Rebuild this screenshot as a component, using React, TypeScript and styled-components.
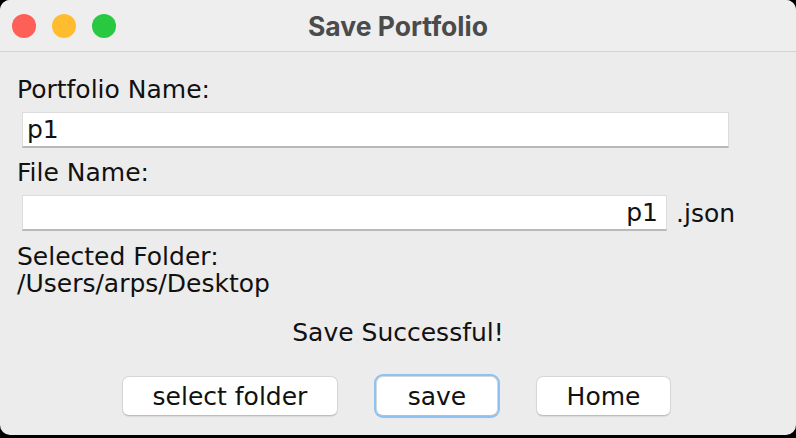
import React from "react";
import styled, { createGlobalStyle } from "styled-components";

const Global = createGlobalStyle`
  html, body { margin: 0; padding: 0; background: #000; }
  body { width: 796px; height: 438px; overflow: hidden; }
`;

const Window = styled.div`
  width: 796px;
  height: 435px;
  background: #ececec;
  border-radius: 10px;
  overflow: hidden;
  display: flex;
  flex-direction: column;
  font-family: "DejaVu Sans", sans-serif;
  color: #111;
`;

const TitleBar = styled.div`
  height: 52px;
  box-sizing: border-box;
  border-bottom: 1px solid #d3d3d3;
  background: #eeeeee;
  display: grid;
  grid-template-columns: 1fr auto 1fr;
  align-items: center;
`;

const Lights = styled.div`
  display: flex;
  gap: 16px;
  padding-left: 12px;
`;

const Light = styled.span<{ $c: string }>`
  width: 24px;
  height: 24px;
  border-radius: 50%;
  background: ${(p) => p.$c};
`;

const Title = styled.div`
  font-family: Inter, "Liberation Sans", sans-serif;
  font-weight: 700;
  font-size: 26.5px;
  color: #4b4b4b;
`;

const Content = styled.div`
  display: flex;
  flex-direction: column;
  padding: 24px 0 0 17px;
`;

const Label = styled.div<{ $mt?: number; $center?: boolean }>`
  font-size: 25px;
  line-height: 27px;
  margin-top: ${(p) => p.$mt ?? 0}px;
  text-align: ${(p) => (p.$center ? "center" : "left")};
  margin-right: ${(p) => (p.$center ? "17px" : "0")};
`;

const Row = styled.div<{ $mt: number }>`
  display: flex;
  align-items: center;
  gap: 9px;
  margin-top: ${(p) => p.$mt}px;
  padding-left: 5px;
`;

const Field = styled.div<{ $w: number; $right?: boolean }>`
  width: ${(p) => p.$w}px;
  height: 36px;
  box-sizing: border-box;
  background: #fff;
  border: 1px solid #dcdcdc;
  border-bottom: 2px solid #b9b9b9;
  font-size: 25px;
  line-height: 34px;
  padding: 0 8px 0 4px;
  text-align: ${(p) => (p.$right ? "right" : "left")};
`;

const Suffix = styled.span`
  font-size: 25px;
`;

const Buttons = styled.div`
  display: flex;
  justify-content: center;
  gap: 38px;
  margin-top: 30px;
  margin-right: 20px;
`;

const Button = styled.button<{ $w: number; $focus?: boolean }>`
  width: ${(p) => p.$w}px;
  height: 40px;
  background: #fff;
  border: 1px solid #d6d6d6;
  border-bottom-color: #bdbdbd;
  border-radius: 7px;
  font-family: "DejaVu Sans", sans-serif;
  font-size: 25px;
  color: #111;
  padding: 0;
  box-shadow: ${(p) => (p.$focus ? "0 0 0 2px #8dc2f5" : "0 1px 1px rgba(0,0,0,0.08)")};
`;

export default function App() {
  return (
    <>
      <Global />
      <Window>
        <TitleBar>
          <Lights>
            <Light $c="#fe5f57" />
            <Light $c="#febc2e" />
            <Light $c="#28c840" />
          </Lights>
          <Title>Save Portfolio</Title>
          <div />
        </TitleBar>
        <Content>
          <Label>Portfolio Name:</Label>
          <Row $mt={9}>
            <Field $w={707}>p1</Field>
          </Row>
          <Label $mt={11}>File Name:</Label>
          <Row $mt={9}>
            <Field $w={645} $right>p1</Field>
            <Suffix>.json</Suffix>
          </Row>
          <Label $mt={12}>Selected Folder:</Label>
          <Label>/Users/arps/Desktop</Label>
          <Label $mt={22} $center>Save Successful!</Label>
          <Buttons>
            <Button $w={216}>select folder</Button>
            <Button $w={122} $focus>save</Button>
            <Button $w={135}>Home</Button>
          </Buttons>
        </Content>
      </Window>
    </>
  );
}
